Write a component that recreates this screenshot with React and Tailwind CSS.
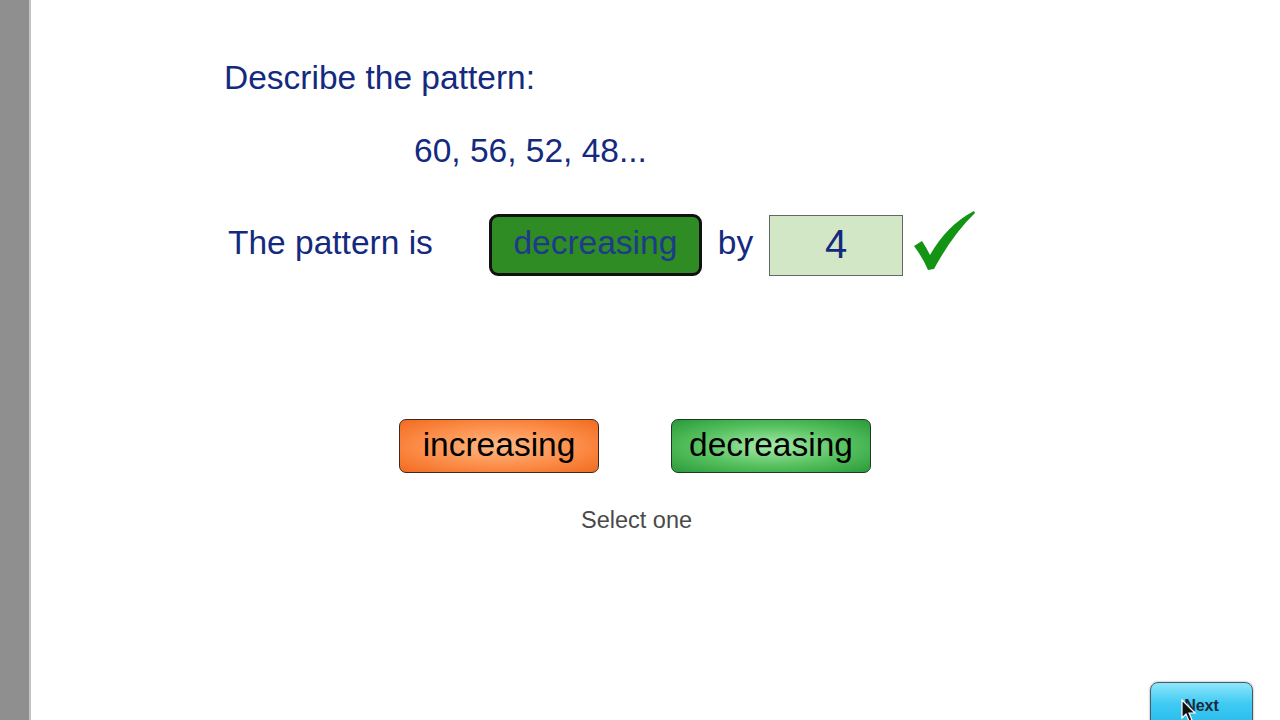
import React from 'react';

const font = { fontFamily: '"Liberation Sans", Arial, sans-serif' };

const CheckMark = () => (
  <svg width="64" height="62" viewBox="0 0 64 62" className="ml-[10px] -mt-[8px]">
    <path d="M1 36 L9 31 Q13 37 17 45 Q34 15 61 1 L62 3 Q40 24 21 59 L15 60 Q10 48 1 36 Z" fill="#149414" />
  </svg>
);

const Cursor = () => (
  <svg width="16" height="24" viewBox="0 0 16 24" className="absolute left-[30px] top-[16px]">
    <path d="M1 1 L1 19 L5 15 L8 22 L11 21 L8 14 L14 14 Z" fill="#111" stroke="#fff" strokeWidth="1.2" />
  </svg>
);

export default function App() {
  return (
    <div className="flex h-[720px] w-[1280px] overflow-hidden bg-white" style={font}>
      {/* left gray strip */}
      <div className="w-[31px] shrink-0 bg-[#8f8f8f] border-r-2 border-[#c4c4c4]" />

      <div className="flex flex-1 flex-col text-[#142a7e]">
        <div className="mt-[58px] ml-[193px] text-[33.5px] leading-[40px]">Describe the pattern:</div>

        <div className="mt-[33px] ml-[383px] text-[33.5px] leading-[40px]">60, 56, 52, 48...</div>

        <div className="mt-[43px] flex h-[62px] items-center">
          <span className="ml-[197px] pb-[5px] text-[33.5px] leading-[40px]">The pattern is</span>
          <div className="ml-[56px] flex h-[62px] w-[213px] items-center justify-center rounded-[9px] border-[3px] border-[#111] bg-[#2f8b24] pb-[4px] text-[33.5px] leading-[40px] text-[#1d3a8c]">
            decreasing
          </div>
          <span className="ml-[16px] pb-[5px] text-[33.5px] leading-[40px]">by</span>
          <div className="ml-[16px] flex h-[61px] w-[134px] items-center justify-center border border-[#666] bg-[#d1e7c5] pb-[2px] text-[40px] leading-[44px]">
            4
          </div>
          <CheckMark />
        </div>

        <div className="mt-[143px] flex">
          <button className="ml-[368px] flex h-[54px] w-[200px] items-center justify-center rounded-[7px] border border-[#3a2a20] bg-[radial-gradient(ellipse_at_center,#ffb983_0%,#fb8a45_60%,#f26a1f_100%)] pb-[2px] text-[33.5px] leading-[40px] text-black">
            increasing
          </button>
          <button className="ml-[72px] flex h-[54px] w-[200px] items-center justify-center rounded-[7px] border border-[#1f3a22] bg-[radial-gradient(ellipse_at_center,#a6ecab_0%,#55c05e_55%,#2b9a3a_100%)] pb-[2px] text-[33.5px] leading-[40px] text-black">
            decreasing
          </button>
        </div>

        <div className="mt-[33px] ml-[550px] text-[23.5px] leading-[28px] text-[#4a4a4a]">Select one</div>

        <div className="mt-[148px] flex justify-end pr-[27px]">
          <div className="relative flex h-[48px] w-[103px] justify-center rounded-[8px] border border-[#4a5a66] bg-[linear-gradient(180deg,#8fe6fb_0%,#3fcaf3_45%,#22b8ec_100%)] pt-[14px] shadow-[0_0_2px_rgba(0,0,0,0.5)]">
            <span className="text-[16px] font-bold leading-[18px] text-[#1b2a3c]">Next</span>
            <Cursor />
          </div>
        </div>
      </div>
    </div>
  );
}
